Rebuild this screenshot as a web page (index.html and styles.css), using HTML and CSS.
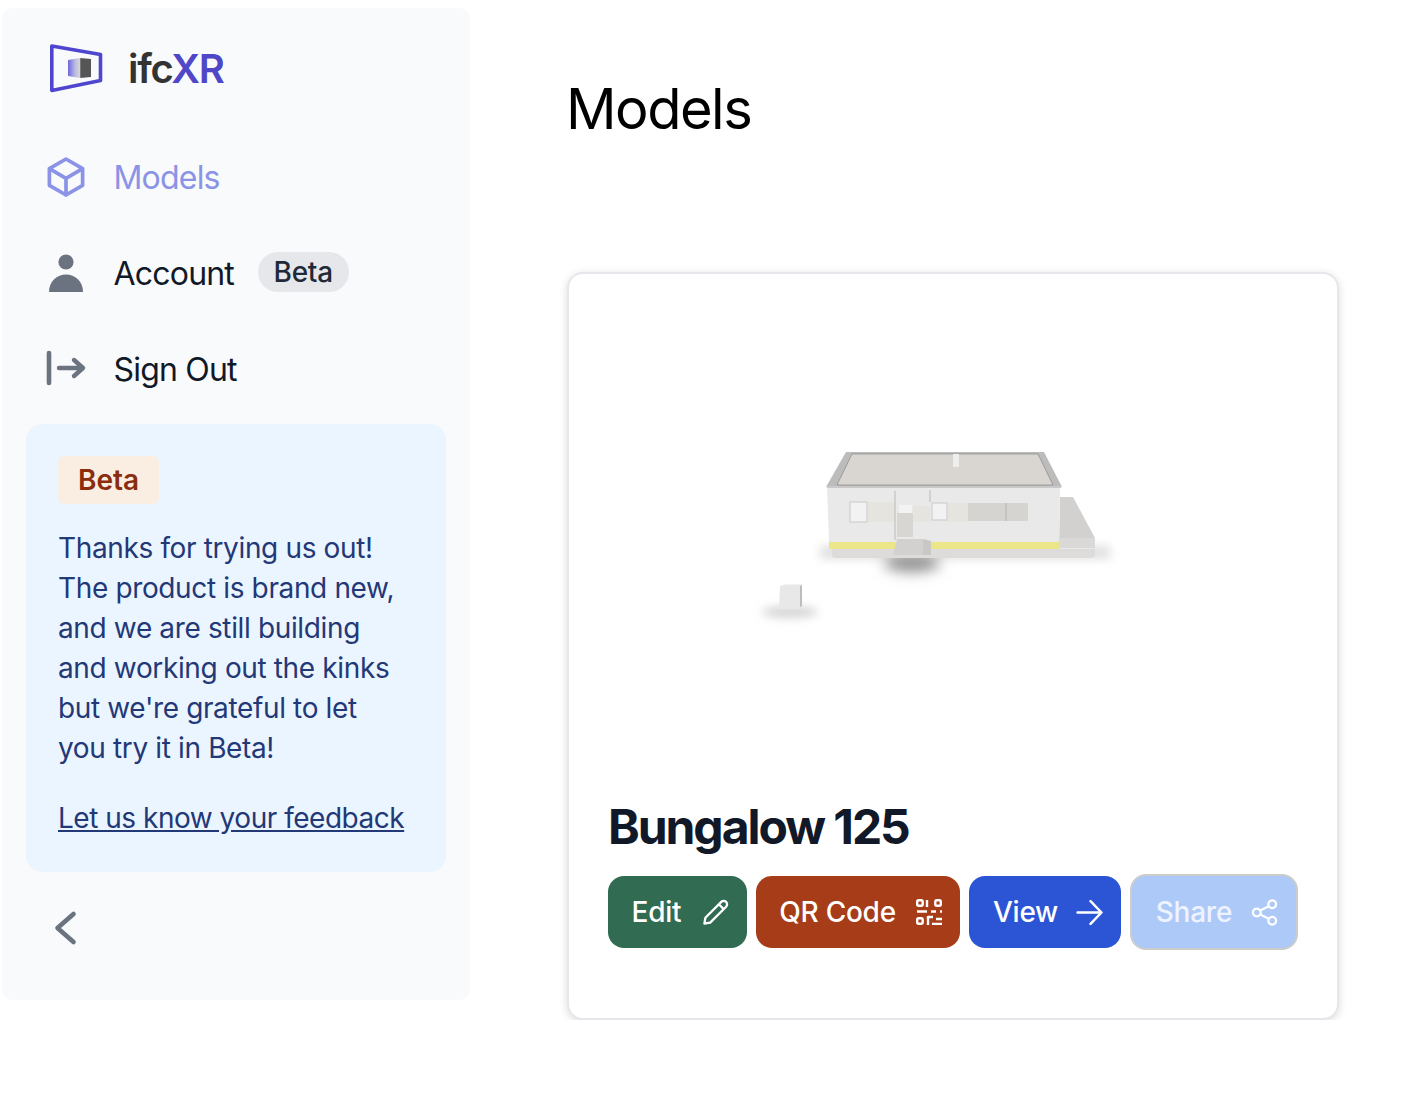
FILE: index.html
```html
<!DOCTYPE html>
<html lang="en">
<head>
  <meta charset="UTF-8" />
  <meta name="viewport" content="width=device-width, initial-scale=1.0"/>
  <title>ifcXR - Models</title>
  <link rel="stylesheet" href="styles.css">
</head>
<body>

  <aside class="sidebar">
    <a class="logo">
      <svg class="logo-mark" viewBox="48 40 58 56">
        <defs>
          <linearGradient id="cubeFade" x1="0" x2="1" y1="0" y2="0">
            <stop offset="0" stop-color="#6f68dc"/>
            <stop offset="0.3" stop-color="#b9b8e4"/>
            <stop offset="0.5" stop-color="#d5d5d5"/>
            <stop offset="0.56" stop-color="#555"/>
            <stop offset="1" stop-color="#555"/>
          </linearGradient>
        </defs>
        <path class="logo-frame" d="M51.800 45 L100.500 53.500 V79.500 L51.800 89.500 Z"/>
        <path fill="url(#cubeFade)" d="M68 59 L80 57 L91 58 V76 L80 77 L68 75 Z"/>
      </svg>
      <span class="logo-text">ifc<b>XR</b></span>
    </a>

    <nav class="nav">
      <a class="nav-item active">
        <svg class="nav-icon" viewBox="-1 -1 26 26" fill="none" stroke="currentColor" stroke-width="2" stroke-linejoin="round" stroke-linecap="round"><path d="M21 7.500 12 2.250 3 7.500m18 0-9 5.250m9-5.250v9l-9 5.250M3 7.500l9 5.250M3 7.500v9l9 5.250m0-9v9"/></svg>
        <span>Models</span>
      </a>
      <a class="nav-item">
        <svg class="nav-icon" viewBox="42 249 48 48" fill="#6b7280"><circle cx="66" cy="262" r="7.600"/><path d="M49 292 C49 281 57 274.500 66 274.500 S83 281 83 292 Z"/></svg>
        <span>Account</span>
        <span class="pill">Beta</span>
      </a>
      <a class="nav-item">
        <svg class="nav-icon" viewBox="42 345 48 48" fill="none" stroke="#6b7280" stroke-linecap="round" stroke-linejoin="round"><path stroke-width="4.600" d="M49 353 V383"/><path stroke-width="4.400" d="M59 368 H82.500 M74 360 L83 368 L74 376"/></svg>
        <span>Sign Out</span>
      </a>
    </nav>

    <div class="beta-card">
      <span class="beta-tag">Beta</span>
      <p>Thanks for trying us out!<br>The product is brand new,<br>and we are still building<br>and working out the kinks<br>but we're grateful to let<br>you try it in Beta!</p>
      <a class="feedback">Let us know your feedback</a>
    </div>

    <button class="collapse">
      <svg viewBox="48 904 36 48" fill="none" stroke="#6b7280" stroke-width="4.600" stroke-linecap="round" stroke-linejoin="round"><path d="M73.500 914 L57.500 928 L73.500 942"/></svg>
    </button>
  </aside>

  <main class="content">
    <h1>Models</h1>

    <div class="card">
      <!-- model preview, viewBox uses page coordinates -->
      <svg class="preview" viewBox="569 274 768 500">
        <defs>
          <filter id="blur7" x="-100%" y="-300%" width="300%" height="700%"><feGaussianBlur stdDeviation="7"/></filter>
          <filter id="blur5" x="-50%" y="-200%" width="200%" height="500%"><feGaussianBlur stdDeviation="5"/></filter>
          <filter id="blur1" x="-10%" y="-10%" width="120%" height="120%"><feGaussianBlur stdDeviation="0.600"/></filter>
        </defs>
        <rect x="820" y="546" width="290" height="13" fill="#e0e0e0" filter="url(#blur5)"/>
        <ellipse cx="912" cy="563" rx="28" ry="9" fill="#8e8e8e" filter="url(#blur7)"/>
        <ellipse cx="790" cy="612" rx="28" ry="6" fill="#d4d4d4" filter="url(#blur5)"/>
        <g filter="url(#blur1)">
          <path fill="#d2d1cf" d="M1060 497 H1073 L1095 538 V548 H1059 Z"/>
          <path fill="#dad9d7" d="M1059 538 H1095 V548 H1059 Z"/>
          <path fill="#dddcda" d="M832 549 H1095 V556 L1092 558 H834 L832 556 Z"/>
          <path fill="#bcbcbc" d="M846 452 H1044 L1062 487 H826 Z"/>
          <path fill="#d9d6d2" stroke="#6e6e6e" stroke-width="0.500" d="M852 454 H1038 L1053 485 H837 Z"/>
          <rect x="953" y="454" width="6" height="13" fill="#eee"/>
          <path fill="#e9e9e9" d="M827 487 H1060 L1059 542 H829 Z"/>
          <rect x="827" y="486" width="234" height="2" fill="#c9c9c9"/>
          <rect x="829" y="542" width="67" height="7" fill="#ebe688"/>
          <rect x="931" y="542" width="128" height="7" fill="#ebe688"/>
          <rect x="850" y="502" width="17" height="20" fill="#f2f2f2" stroke="#cfcfcf" stroke-width="1.200"/>
          <rect x="868" y="502" width="27" height="20" fill="#e6e4df"/>
          <rect x="899" y="505" width="13" height="8" fill="#f3f3f3"/>
          <rect x="897" y="513" width="16" height="24" fill="#d8d6d2"/>
          <rect x="913" y="506" width="17" height="16" fill="#e6e4df"/>
          <rect x="932" y="503" width="15" height="17" fill="#f2f2f2" stroke="#cfcfcf" stroke-width="1.200"/>
          <rect x="948" y="503" width="20" height="19" fill="#e6e4df"/>
          <rect x="968" y="503" width="60" height="18" fill="#d6d4d0"/>
          <path stroke="#a8a8a8" stroke-width="0.700" fill="none" d="M895 491 V540 M930 490 V502 M1006 503 V521"/>
          <path fill="#d2d1cf" d="M897 539 H923 L931 541 V555 H893 Z"/>
          <path fill="#c9c8c6" d="M923 539 L931 541 V555 H923 Z"/>
          <path fill="#e8e8e8" d="M780 586 L785 584.500 H802 V606 L799 609 H779 Z"/>
          <path fill="#bdbdbd" d="M800 586 L802 584.500 V606 L800 607 Z"/>
        </g>
      </svg>

      <div class="card-body">
        <h2>Bungalow 125</h2>
        <div class="actions">
          <a class="btn btn-green">Edit
            <svg viewBox="0 0 28 28" fill="none" stroke="#fff" stroke-width="2.400" stroke-linejoin="round"><path d="M2.500 25.500 L3.500 19.500 L20 3 A3.500 3.500 0 0 1 25 8 L8.500 24.500 Z M17.500 5.500 L22.500 10.500"/></svg>
          </a>
          <a class="btn btn-rust">QR Code
            <svg viewBox="0 0 26 26" fill="none" stroke="#fff" stroke-width="2.400"><rect x="1.200" y="1.200" width="5.500" height="5.500" rx="1.500"/><rect x="19.300" y="1.200" width="5.500" height="5.500" rx="1.500"/><rect x="1.200" y="19.300" width="5.500" height="5.500" rx="1.500"/><path d="M1 12.500 H11 M11 1 V8 M15 12.500 H20 M24 12.500 H26 M12 17 V26 M12 18 H17 M16 25 H26 M20 20 H26"/></svg>
          </a>
          <a class="btn btn-blue">View
            <svg viewBox="0 0 26 26" fill="none" stroke="#fff" stroke-width="2.400" stroke-linecap="round" stroke-linejoin="round"><path d="M1.500 13 H24.500 M14 2 L24.500 13 L14 24"/></svg>
          </a>
          <a class="btn btn-share">Share
            <svg viewBox="0 0 28 28" fill="none" stroke="#fff" stroke-width="2.400"><circle cx="6" cy="14" r="4"/><circle cx="22" cy="5.500" r="4"/><circle cx="22" cy="22.500" r="4"/><path d="M9.500 12 L18.500 7.500 M9.500 16 L18.500 20.500"/></svg>
          </a>
        </div>
      </div>
    </div>
  </main>

</body>
</html>
```

FILE: styles.css
```css
body {
  font-family: Inter, "Liberation Sans", sans-serif;
  margin: 0;
  padding: 8px 0 0 2px;
  background-color: #fff;
  color: #111827;
  display: flex;
  align-items: flex-start;
}
.sidebar {
  width: 468px;
  height: 992px;
  box-sizing: border-box;
  flex-shrink: 0;
  background-color: #f9fafb;
  border-radius: 10px;
  padding: 0 24px;
}
.logo {
  display: flex;
  align-items: center;
  height: 121px;
  padding-left: 22px;
  gap: 22px;
}
.logo-mark {
  width: 58px;
  height: 56px;
}
.logo-frame {
  fill: none;
  stroke: #4f46cf;
  stroke-width: 3.6;
  stroke-linejoin: round;
}
.logo-text {
  font-size: 40px;
  font-weight: 600;
  color: #333;
  letter-spacing: -1.3px;
}
.logo-text b {
  font-weight: 600;
  color: #4f46c8;
}
.nav-item {
  display: flex;
  align-items: center;
  height: 96px;
  padding-left: 16px;
  gap: 23.5px;
  font-size: 32px;
  letter-spacing: -0.8px;
}
.nav-item.active {
  color: #8b93e6;
}
.nav-icon {
  width: 48px;
  height: 48px;
}
.pill {
  background-color: #e5e7eb;
  color: #1f2937;
  font-size: 28px;
  font-weight: 500;
  letter-spacing: -0.25px;
  line-height: 40px;
  padding: 0 16px;
  border-radius: 20px;
  margin-top: -2px;
}
.beta-card {
  margin-top: 7px;
  background-color: #ebf5ff;
  border-radius: 16px;
  padding: 32px;
  height: 448px;
  box-sizing: border-box;
  color: #233876;
  font-size: 28px;
  line-height: 40px;
  letter-spacing: -0.36px;
}
.beta-tag {
  display: inline-block;
  background-color: #faeee3;
  color: #8a2c0d;
  font-weight: 600;
  letter-spacing: 0;
  line-height: 48px;
  padding: 0 20px;
  border-radius: 6px;
}
.beta-card p {
  margin: 24px 0 30px;
}
.feedback {
  text-decoration: underline;
  letter-spacing: -0.48px;
}
.collapse {
  display: block;
  margin: 32px 0 0 22px;
  padding: 0;
  border: none;
  background: none;
}
.collapse svg {
  display: block;
  width: 36px;
  height: 48px;
}
.content {
  flex: 1;
  padding: 0 83px 0 97px;
}
h1 {
  font-size: 56px;
  font-weight: 400;
  line-height: 72px;
  letter-spacing: -1.5px;
  color: #000;
  margin: 65px 0 127px -1px;
}
.card {
  width: 772px;
  height: 748px;
  box-sizing: border-box;
  background: #fff;
  border: 2px solid #e5e7eb;
  border-radius: 16px;
  box-shadow: 0 2px 8px rgba(0,0,0,0.14);
}
.preview {
  display: block;
  width: 768px;
  height: 500px;
}
.card-body {
  padding: 23px 39px 0;
}
h2 {
  font-size: 48px;
  font-weight: 700;
  line-height: 60px;
  letter-spacing: -2.05px;
  color: #111827;
  margin: 0 0 17px;
}
.actions {
  display: flex;
  align-items: center;
  gap: 9px;
}
.btn {
  display: flex;
  align-items: center;
  justify-content: space-between;
  box-sizing: border-box;
  height: 72px;
  padding: 0 18px 0 23.5px;
  border-radius: 16px;
  color: #fff;
  font-size: 28px;
  font-weight: 500;
  letter-spacing: -0.25px;
}
.btn svg {
  width: 27px;
  height: 27px;
}
.btn-green {
  background-color: #316b52;
  width: 139px;
}
.btn-rust {
  background-color: #a63c18;
  width: 205px;
}
.btn-rust svg {
  width: 26px;
  height: 26px;
}
.btn-blue {
  background-color: #2c55d6;
  width: 152px;
}
.btn-share {
  background-color: #adc9f8;
  border: 2px solid #cccccc;
  width: 168px;
  height: 76px;
  color: #eef4ff;
}
```
